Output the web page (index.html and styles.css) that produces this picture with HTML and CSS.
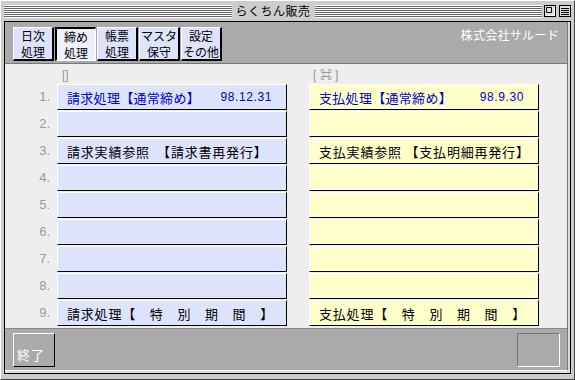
FILE: index.html
```html
<!DOCTYPE html>
<html lang="ja">
<head>
    <meta charset="UTF-8">
    <title>らくちん販売</title>
    <link rel="stylesheet" href="styles.css">
</head>
<body>
    <div class="window">
        <!-- Title bar -->
        <div class="titlebar">
            <span class="stripes"></span>
            <span class="title">らくちん販売</span>
            <span class="stripes"></span>
            <span class="tb-icons">
                <svg width="12" height="12" viewBox="0 0 12 12">
                    <rect x="0.5" y="0.5" width="11" height="11" fill="#ddd" stroke="#000"/>
                    <path d="M2.5 2.5 H7.5 V7.5 H2.5 Z" fill="none" stroke="#000"/>
                    <path d="M2 10.5 H10.5 V2" fill="none" stroke="#fff"/>
                </svg>
                <svg width="12" height="12" viewBox="0 0 12 12">
                    <rect x="0.5" y="0.5" width="11" height="11" fill="#ddd" stroke="#000"/>
                    <path d="M2 3.5 H10 M2 5.5 H10 M2 7.5 H10 M2 9.5 H10" stroke="#000"/>
                </svg>
            </span>
        </div>

        <div class="frame">
            <div class="inner">
                <!-- Menu buttons -->
                <div class="toolbar">
                    <div class="menu">
                        <button class="menu-btn">日次<br>処理</button>
                        <button class="menu-btn active">締め<br>処理</button>
                        <button class="menu-btn">帳票<br>処理</button>
                        <button class="menu-btn">マスタ<br>保守</button>
                        <button class="menu-btn">設定<br>その他</button>
                    </div>
                    <div class="company">株式会社サルード</div>
                </div>

                <!-- Two lists -->
                <div class="content">
                    <div class="list">
                        <span></span>
                        <span class="col-head">[]</span>
                        <span class="col-head right">[ ⌘ ]</span>

                        <span class="num">1.</span>
                        <div class="cell blue main"><span>請求処理【通常締め】</span><span class="date">98.12.31</span></div>
                        <div class="cell yellow main"><span>支払処理【通常締め】</span><span class="date">98.9.30</span></div>

                        <span class="num">2.</span>
                        <div class="cell blue"></div>
                        <div class="cell yellow"></div>

                        <span class="num">3.</span>
                        <div class="cell blue">請求実績参照　【請求書再発行】</div>
                        <div class="cell yellow">支払実績参照 【支払明細再発行】</div>

                        <span class="num">4.</span>
                        <div class="cell blue"></div>
                        <div class="cell yellow"></div>

                        <span class="num">5.</span>
                        <div class="cell blue"></div>
                        <div class="cell yellow"></div>

                        <span class="num">6.</span>
                        <div class="cell blue"></div>
                        <div class="cell yellow"></div>

                        <span class="num">7.</span>
                        <div class="cell blue"></div>
                        <div class="cell yellow"></div>

                        <span class="num">8.</span>
                        <div class="cell blue"></div>
                        <div class="cell yellow"></div>

                        <span class="num">9.</span>
                        <div class="cell blue">請求処理【　特　別　期　間　】</div>
                        <div class="cell yellow">支払処理【　特　別　期　間　】</div>
                    </div>
                </div>

                <!-- Bottom bar -->
                <div class="footer">
                    <button class="quit">終了</button>
                    <div class="blank"></div>
                </div>
            </div>
        </div>
    </div>
</body>
</html>
```

FILE: styles.css
```css
* {
    box-sizing: border-box;
}
body {
    margin: 0;
    width: 575px;
    height: 380px;
    overflow: hidden;
    font-family: "Noto Sans CJK JP", sans-serif;
    background-color: #cccccc;
}
.window {
    width: 575px;
    height: 380px;
    background-color: #cccccc;
    border: 1px solid #444;
    border-top-color: #fff;
    border-left-color: #fff;
    padding: 0 3px 5px 3px;
    display: flex;
    flex-direction: column;
}
.titlebar {
    height: 20px;
    display: flex;
    align-items: center;
}
.stripes {
    flex: 1;
    height: 13px;
    background: repeating-linear-gradient(#fff 0 1px, #666 1px 2px);
}
.title {
    padding: 0 4px;
    font-size: 12px;
    line-height: 14px;
    letter-spacing: 0.5px;
    color: #000;
}
.tb-icons {
    display: flex;
    gap: 3px;
    margin-left: 2px;
}
.tb-icons svg {
    display: block;
}
.frame {
    flex: 1;
    border: 1px solid #000;
    background-color: #dddddd;
    padding: 0 2px 2px 0;
}
.inner {
    height: 100%;
    display: flex;
    flex-direction: column;
    border-right: 1px solid #777;
    border-bottom: 1px solid #fff;
}
.toolbar {
    height: 42px;
    background-color: #aaaaaa;
    border-bottom: 1px solid #777;
    display: flex;
    justify-content: space-between;
    padding: 5px 8px 0 8px;
}
.menu {
    display: flex;
    gap: 1px;
    align-items: flex-start;
}
.menu-btn {
    width: 41px;
    height: 34px;
    padding: 0;
    margin: 0;
    background-color: #dde3fb;
    border: 1px solid #fff;
    border-right: 2px solid #000;
    border-bottom: 2px solid #000;
    font-family: inherit;
    font-size: 12px;
    line-height: 16px;
    color: #000;
    cursor: pointer;
}
.menu-btn.active {
    background-color: #eef0fc;
    border: 1px solid #fff;
    border-top: 2px solid #000;
    border-left: 2px solid #000;
}
.company {
    color: #fff;
    font-size: 12px;
    line-height: 14px;
    letter-spacing: 0.3px;
    padding-top: 1px;
}
.content {
    flex: 1;
    background-color: #eeeeee;
    padding: 4px 0 0 23px;
}
.list {
    display: grid;
    grid-template-columns: 29px 230px 252px;
    grid-template-rows: 15px repeat(9, 26px);
    row-gap: 1px;
}
.col-head {
    padding-left: 5px;
    font-family: "Liberation Sans", sans-serif;
    font-size: 12px;
    line-height: 15px;
    color: #999;
    white-space: pre;
}
.col-head.right {
    margin-left: 22px;
    padding-left: 4px;
}
.num {
    font-family: "Liberation Sans", sans-serif;
    font-size: 13px;
    line-height: 26px;
    color: #999;
    text-align: right;
    padding-right: 7px;
}
.cell {
    height: 26px;
    border: 1px solid #fff;
    border-right-color: #000;
    border-bottom-color: #000;
    padding: 0 14px 0 9px;
    display: flex;
    align-items: center;
    font-size: 13px;
    letter-spacing: 0.8px;
    color: #000;
    white-space: pre;
}
.cell.blue {
    background-color: #dde3fb;
}
.cell.yellow {
    margin-left: 22px;
    background-color: #ffffcc;
}
.cell.main {
    color: #0000cc;
    justify-content: space-between;
    letter-spacing: 0.3px;
}
.date {
    font-family: "Liberation Sans", sans-serif;
    font-size: 12px;
    letter-spacing: 0.6px;
}
.footer {
    height: 42px;
    background-color: #aaaaaa;
    border-top: 1px solid #888;
    display: flex;
    justify-content: space-between;
    align-items: center;
    padding: 0 7px 0 8px;
}
.quit {
    width: 42px;
    height: 34px;
    margin: 0;
    padding: 0 0 2px 3px;
    background-color: #aaaaaa;
    border: 1px solid #fff;
    border-right-color: #000;
    border-bottom-color: #000;
    color: #fff;
    font-family: inherit;
    font-size: 13px;
    letter-spacing: 1px;
    text-align: left;
    display: flex;
    align-items: flex-end;
    cursor: pointer;
}
.blank {
    width: 43px;
    height: 34px;
    border: 1px solid #777;
    border-right-color: #fff;
    border-bottom-color: #fff;
}
```
